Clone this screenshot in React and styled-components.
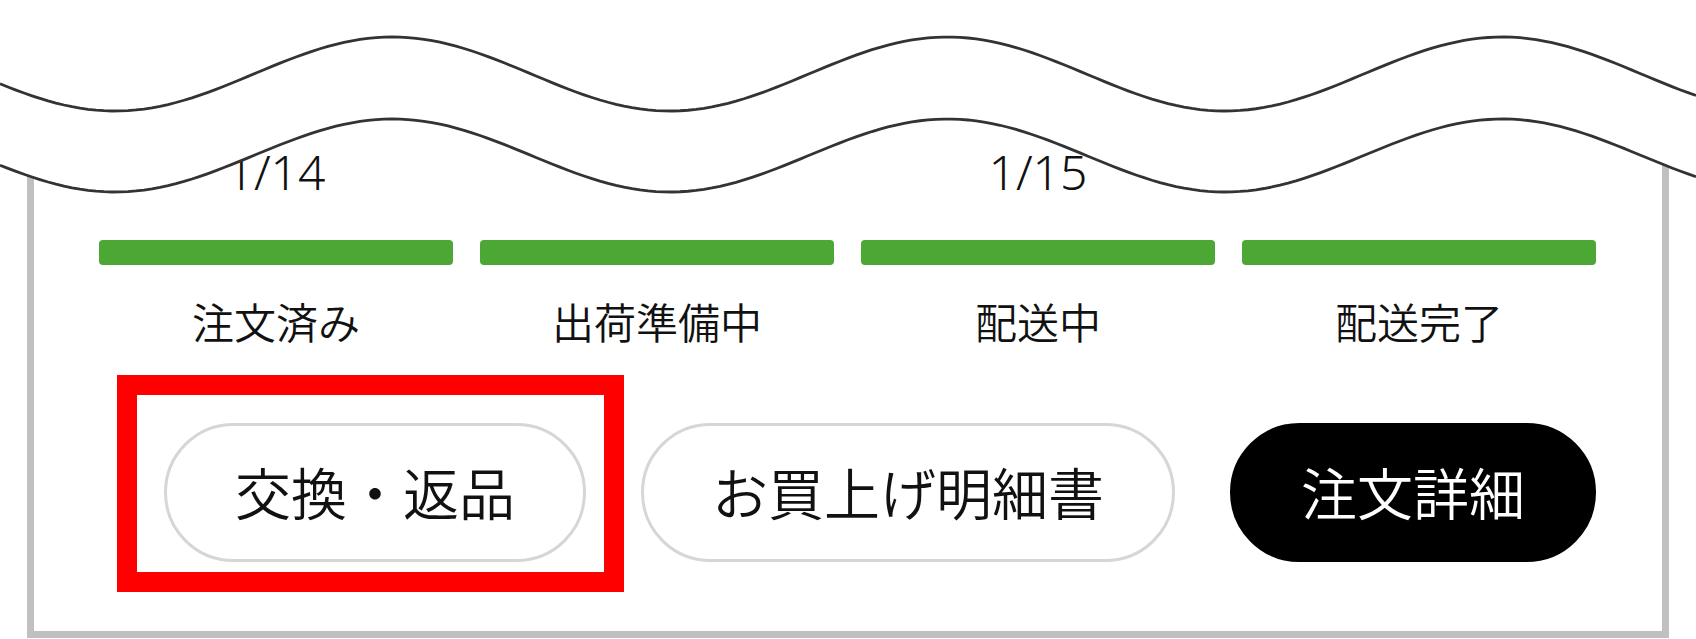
import styled, { createGlobalStyle } from "styled-components"

const GlobalStyle = createGlobalStyle`
    body{
        margin: 0;
        background: #fff;
        font-family: "Noto Sans CJK JP", "Noto Sans", sans-serif;
        color: #111;
    }
`

const steps = [
    { date: "1/14", label: "注文済み" },
    { date: "", label: "出荷準備中" },
    { date: "1/15", label: "配送中" },
    { date: "", label: "配送完了" },
]

// wavy "cut" drawn over the top of the card
const wave = (base, amp) => {
    const pts = []
    for (let x = 0; x <= 1696; x += 8) {
        const y = base + amp * Math.cos((2 * Math.PI * (x - 115)) / 555)
        pts.push(`${x},${y.toFixed(2)}`)
    }
    return pts
}

const Cut = () => {
    const top = wave(74, 37)
    const bottom = wave(155.5, 36.5)
    const fill = `M0,0 L1696,0 L${bottom.slice().reverse().join(" L")} Z`
    return (
        <CutSvg width="1696" height="220" viewBox="0 0 1696 220">
            <path d={fill} fill="#fff" />
            <polyline points={top.join(" ")} fill="none" stroke="#333" strokeWidth="2.8" />
            <polyline points={bottom.join(" ")} fill="none" stroke="#333" strokeWidth="2.8" />
        </CutSvg>
    )
}

const App = () =>{
    return(
        <Page>
            <GlobalStyle/>
            <Card>
                <Steps>
                    {steps.map((s) => (
                        <Step key={s.label}>
                            <DateText>{s.date}</DateText>
                            <Bar/>
                            <Label>{s.label}</Label>
                        </Step>
                    ))}
                </Steps>
                <Actions>
                    <Highlight>
                        <Pill>交換・返品</Pill>
                    </Highlight>
                    <Pill>お買上げ明細書</Pill>
                    <Pill dark>注文詳細</Pill>
                </Actions>
            </Card>
            <Cut/>
        </Page>
    )
}

export default App

const Page = styled.div`
    position: relative;
    width: 1696px;
    height: 639px;
    overflow: hidden;
    background: #fff;
`
const CutSvg = styled.svg`
    position: absolute;
    top: 0;
    left: 0;
    display: block;
`
const Card = styled.div`
    box-sizing: border-box;
    width: 1642px;
    margin: 110px 0 0 27px;
    border: 7px solid #c0c0c0;
    padding: 27px 66px 69px 65px;
    background: #fff;
`
const Steps = styled.div`
    display: grid;
    grid-template-columns: repeat(4, 1fr);
    column-gap: 27px;
`
const Step = styled.div`
    display: flex;
    flex-direction: column;
    align-items: center;
`
const DateText = styled.div`
    height: 55px;
    font-family: "Noto Sans", sans-serif;
    font-size: 48px;
    font-weight: 300;
    line-height: 55px;
    color: #111;
`
const Bar = styled.div`
    width: 100%;
    height: 25px;
    margin-top: 41px;
    border-radius: 4px;
    background-color: #4da734;
`
const Label = styled.div`
    margin-top: 31px;
    font-size: 42px;
    font-weight: 350;
    line-height: 1.2;
    color: #111;
`
const Actions = styled.div`
    display: flex;
    justify-content: flex-end;
    gap: 55px;
    margin-top: 77px;
`
const Highlight = styled.div`
    position: relative;
    display: flex;

    &::after{
        content: "";
        position: absolute;
        top: -48px;
        left: -47px;
        right: -38px;
        bottom: -30px;
        border: 20px solid #ff0000;
        pointer-events: none;
    }
`
const Pill = styled.div`
    box-sizing: border-box;
    height: 139px;
    padding: 0 68px 5px;
    display: flex;
    align-items: center;
    justify-content: center;
    border-radius: 70px;
    border: 3px solid ${(p) => (p.dark ? "#000" : "#d6d6d6")};
    background-color: ${(p) => (p.dark ? "#000" : "#fff")};
    color: ${(p) => (p.dark ? "#fff" : "#111")};
    font-size: 56px;
    font-weight: 350;
    white-space: nowrap;
`
